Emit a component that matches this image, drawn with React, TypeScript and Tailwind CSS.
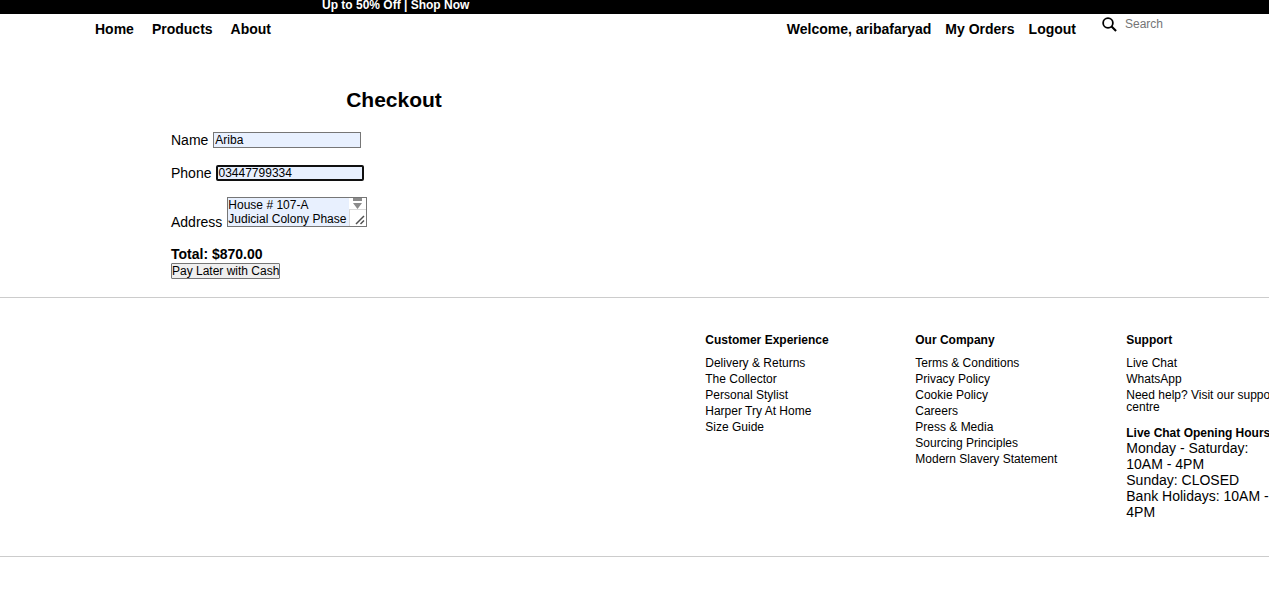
import React from "react";

const columns = [
  {
    title: "Customer Experience",
    links: ["Delivery & Returns", "The Collector", "Personal Stylist", "Harper Try At Home", "Size Guide"],
  },
  {
    title: "Our Company",
    links: [
      "Terms & Conditions",
      "Privacy Policy",
      "Cookie Policy",
      "Careers",
      "Press & Media",
      "Sourcing Principles",
      "Modern Slavery Statement",
    ],
  },
  {
    title: "Support",
    links: ["Live Chat", "WhatsApp", "Need help? Visit our support centre"],
  },
];

function Header() {
  return (
    <header>
      <div className="h-[14px] overflow-hidden bg-black pl-[322px] text-[12px] leading-[10px] font-bold text-white">
        <p>Up to 50% Off | Shop Now</p>
      </div>
      <div className="flex items-start pt-[2px] pr-[43px] pl-[95px]">
        <nav className="flex gap-[18px] pt-[5px] text-[14px] leading-4 font-bold">
          <a href="#home">Home</a>
          <a href="#products">Products</a>
          <a href="#about">About</a>
        </nav>
        <nav className="ml-auto flex gap-[14px] pt-[5px] text-[14px] leading-4 font-bold">
          <a href="#account">Welcome, aribafaryad</a>
          <a href="#orders">My Orders</a>
          <a href="#logout">Logout</a>
        </nav>
        <form role="search" className="ml-[26px] flex items-center gap-2">
          <label htmlFor="search" aria-label="Search">
            <svg width="15" height="15" viewBox="0 0 16 16" fill="none" stroke="black" strokeWidth="1.9">
              <circle cx="6.4" cy="6.4" r="5.2" />
              <path d="M10.200 10.200 15 15" strokeWidth="2.200" />
            </svg>
          </label>
          <input
            id="search"
            type="search"
            placeholder="Search"
            className="h-4 w-[101px] text-[12px] leading-4 outline-none placeholder:text-[#757575]"
          />
        </form>
      </div>
    </header>
  );
}

function Checkout() {
  return (
    <main className="px-[171px] pt-[51px] pb-[18px]">
      <form className="flex w-[446px] flex-col items-start">
        <h1 className="self-center text-[21px] leading-6 font-bold">Checkout</h1>
        <div className="mt-5 flex items-center gap-[5px]">
          <label htmlFor="name" className="text-[14px] leading-4">Name</label>
          <input
            id="name"
            type="text"
            defaultValue="Ariba"
            className="h-4 w-[148px] border border-[#767676] bg-[#e8f0fe] pl-px text-[12px] leading-[14px] outline-none"
          />
        </div>
        <div className="mt-[17px] flex items-center gap-[5px]">
          <label htmlFor="phone" className="text-[14px] leading-4">Phone</label>
          <input
            id="phone"
            type="tel"
            defaultValue="03447799334"
            className="h-4 w-[148px] rounded-[2px] border-2 border-[#101010] bg-[#e8f0fe] text-[12px] leading-3 outline-none"
          />
        </div>
        <div className="mt-4 flex items-end gap-[5px]">
          <label htmlFor="address" className="text-[14px] leading-[10px]">Address</label>
          <div className="flex h-[30px] w-[140px] border border-[#767676]">
            <textarea
              id="address"
              rows={2}
              defaultValue={"House # 107-A\nJudicial Colony Phase"}
              className="h-7 min-w-0 flex-1 resize-none overflow-hidden bg-[#e8f0fe] text-[12px] leading-[14px] whitespace-pre outline-none"
            />
            <svg width="17" height="28" viewBox="0 0 17 28" className="shrink-0" aria-hidden="true">
              <path d="M0 0h17v28H0z" fill="#fff" />
              <path d="M4 0h9v3H4zM4 5h9l-4.500 6z" fill="#8b8b8b" />
              <path d="M0 11.500h17M.5 12v16" stroke="#d9d9d9" />
              <path d="m7 26 8-8M11.500 26l3.500-3.500" stroke="#505050" strokeWidth="1.500" />
            </svg>
          </div>
        </div>
        <p className="mt-[19px] text-[14px] leading-4 font-bold">Total: $870.00</p>
        <button
          type="button"
          className="mt-px h-4 rounded-[1px] border border-[#767676] bg-[#efefef] text-[12px] leading-[14px] whitespace-nowrap"
        >
          Pay Later with Cash
        </button>
      </form>
    </main>
  );
}

function Footer() {
  return (
    <footer className="overflow-hidden border-y border-[#ccc] pt-[34px] pb-9">
      <div className="ml-[55.5%] grid grid-cols-[210px_211px_160px] pl-px">
        {columns.map((column) => (
          <section key={column.title}>
            <h2 className="text-[12px] leading-4 font-bold">{column.title}</h2>
            <ul className="mt-[9px] flex flex-col gap-1 text-[12px] leading-3">
              {column.links.map((link) => (
                <li key={link}>
                  <a href="#info">{link}</a>
                </li>
              ))}
            </ul>
            {column.title === "Support" && (
              <div className="mt-[13px] text-[14px] leading-4">
                <h3 className="text-[12px] leading-[14px] font-bold whitespace-nowrap">Live Chat Opening Hours</h3>
                <p>Monday - Saturday: 10AM - 4PM</p>
                <p>Sunday: CLOSED</p>
                <p>Bank Holidays: 10AM - 4PM</p>
              </div>
            )}
          </section>
        ))}
      </div>
    </footer>
  );
}

export default function App() {
  return (
    <div className="min-h-screen overflow-x-hidden bg-white font-['Liberation_Sans',Arial,sans-serif] text-black">
      <Header />
      <Checkout />
      <Footer />
    </div>
  );
}
